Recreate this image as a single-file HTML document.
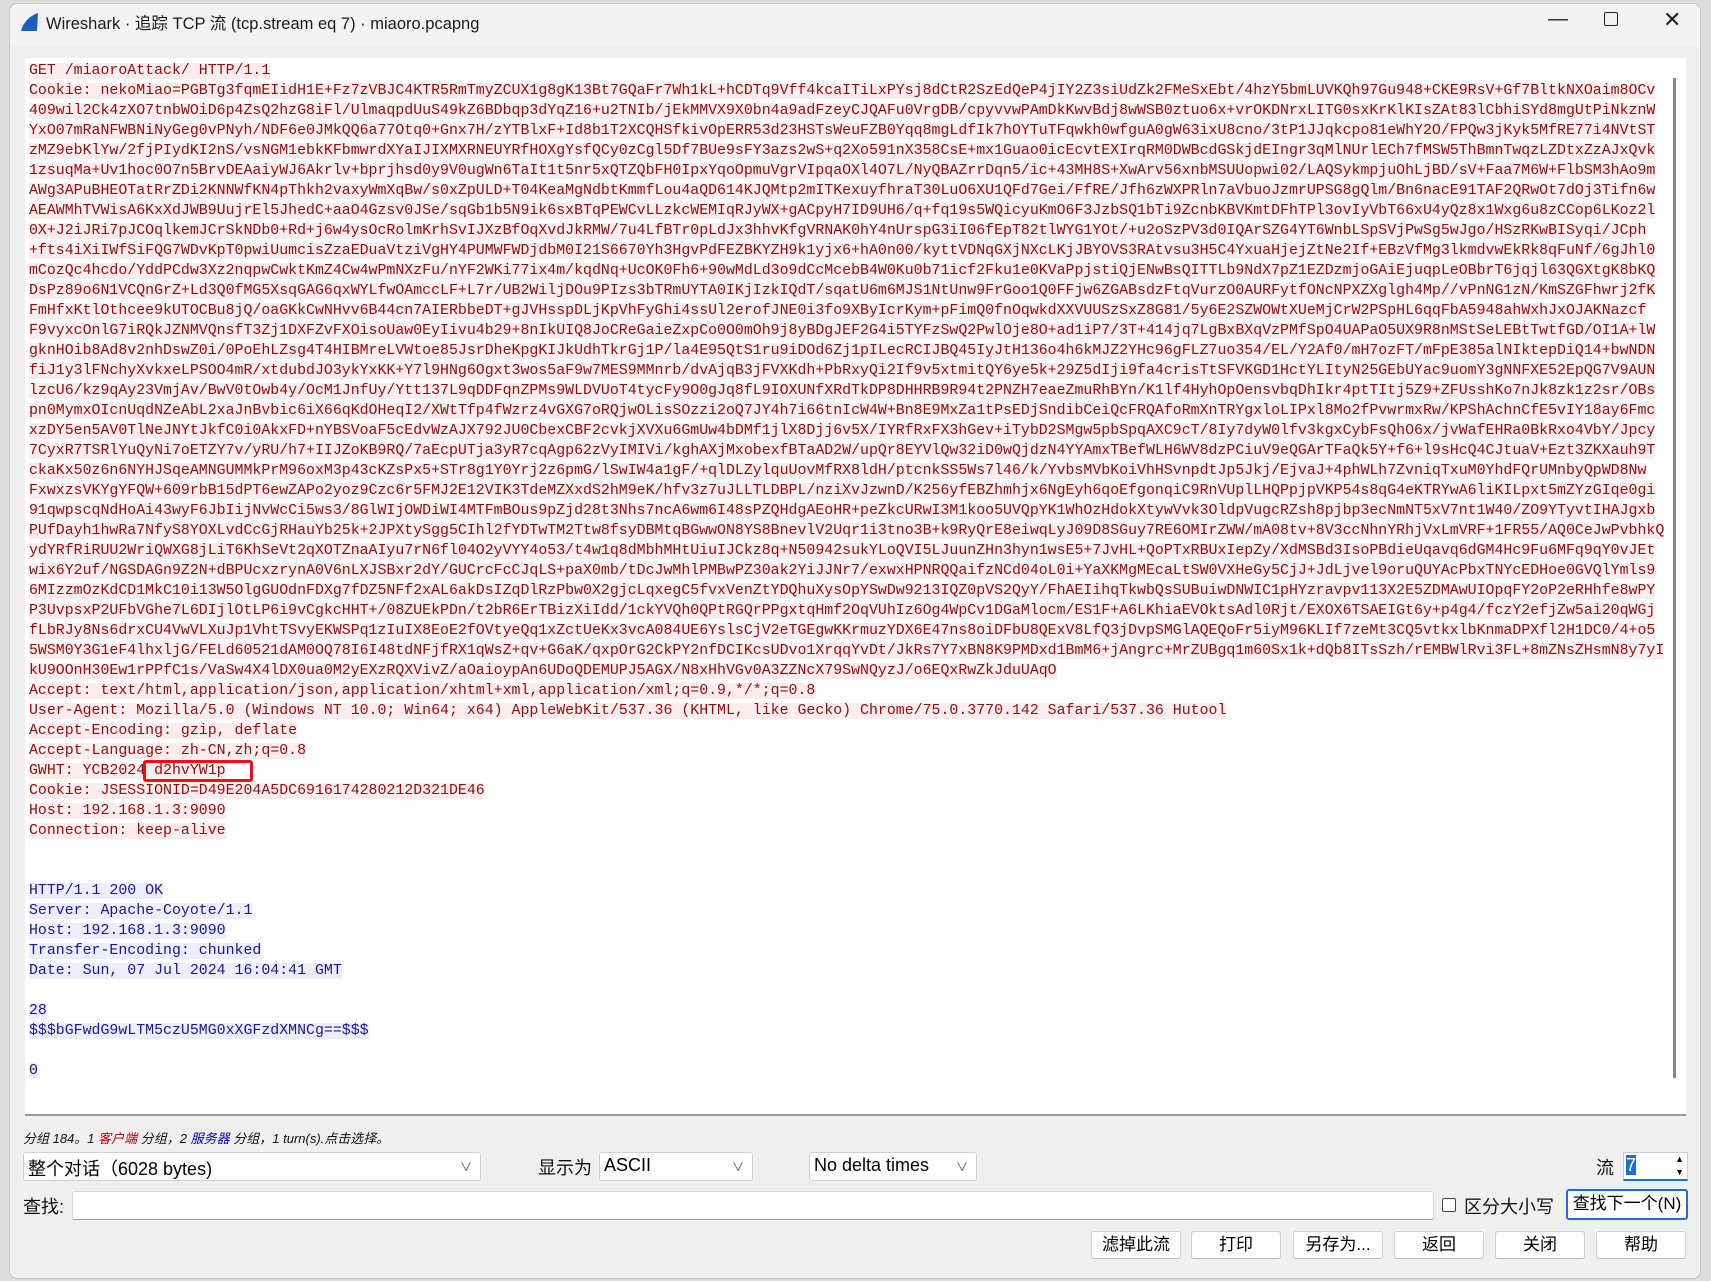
<!DOCTYPE html>
<html><head><meta charset="utf-8"><style>
*{box-sizing:border-box;margin:0;padding:0}
body{width:1711px;height:1281px;background:#dcdcdc;position:relative;overflow:hidden;font-family:"Liberation Sans","Noto Sans CJK SC",sans-serif}
.win{position:absolute;left:9px;top:3px;width:1692px;height:1276px;background:#efefef;border:1px solid #c8c8c8;border-radius:8px 8px 8px 8px}
.title{position:absolute;left:0;top:0;width:100%;height:42px;background:#f3f3f3;border-radius:8px 8px 0 0}
.title .t{position:absolute;left:36px;top:6px;font-size:16.5px;color:#1a1a1a}
.title .ctl{position:absolute;top:4px;font-size:20px;color:#222}
.text{position:absolute;left:15px;top:54px;width:1661px;height:1058px;background:#fff;border-bottom:2px solid #999}
pre{position:absolute;left:4px;top:3px;font-family:"Liberation Mono",monospace;font-size:14.9px;line-height:20px;white-space:pre}
.q{color:#8a1010;background:#fbeded}
.r{color:#1a1a8a;background:#ededfb}
.sb{position:absolute;right:10px;top:20px;width:3px;height:1000px;background:#888}
.box{position:absolute;left:118px;top:702px;width:110px;height:22px;border:3px solid #ee1111;border-radius:3px}
.ui{position:absolute;font-size:17px;color:#111}
.combo{position:absolute;background:#fdfdfd;border:1px solid #d0d0d0;border-radius:3px;height:29px;font-size:18px;padding:2px 4px}
.combo:after{content:"\2228";position:absolute;right:8px;top:5px;font-size:12px;color:#555}
.btn{position:absolute;top:1227px;height:28px;width:90px;background:#fdfdfd;border:1px solid #d0d0d0;border-bottom-color:#bbb;border-radius:3px;font-size:17px;text-align:center;line-height:26px}
</style></head><body>
<div class="win">
<div class="title"><svg style="position:absolute;left:9px;top:8px" width="20" height="20" viewBox="0 0 20 20"><path d="M2 19 C4 11 10 4 19 1 L18 19 Z" fill="#1a5fc0"/></svg><div class="t">Wireshark · 追踪 TCP 流 (tcp.stream eq 7) · miaoro.pcapng</div>
<div class="ctl" style="left:1538px">—</div><div class="ctl" style="left:1594px;top:8px;width:14px;height:14px;border:1.5px solid #222;border-radius:2px"></div><div class="ctl" style="left:1653px;top:3px;font-size:22px">✕</div></div>
<div class="text"><pre><span class="q">GET /miaoroAttack/ HTTP/1.1
Cookie: nekoMiao=PGBTg3fqmEIidH1E+Fz7zVBJC4KTR5RmTmyZCUX1g8gK13Bt7GQaFr7Wh1kL+hCDTq9Vff4kcaITiLxPYsj8dCtR2SzEdQeP4jIY2Z3siUdZk2FMeSxEbt/4hzY5bmLUVKQh97Gu948+CKE9RsV+Gf7BltkNXOaim8OCv
409wil2Ck4zXO7tnbWOiD6p4ZsQ2hzG8iFl/UlmaqpdUuS49kZ6BDbqp3dYqZ16+u2TNIb/jEkMMVX9X0bn4a9adFzeyCJQAFu0VrgDB/cpyvvwPAmDkKwvBdj8wWSB0ztuo6x+vrOKDNrxLITG0sxKrKlKIsZAt83lCbhiSYd8mgUtPiNkznW
YxO07mRaNFWBNiNyGeg0vPNyh/NDF6e0JMkQQ6a77Otq0+Gnx7H/zYTBlxF+Id8b1T2XCQHSfkivOpERR53d23HSTsWeuFZB0Yqq8mgLdfIk7hOYTuTFqwkh0wfguA0gW63ixU8cno/3tP1JJqkcpo81eWhY2O/FPQw3jKyk5MfRE77i4NVtST
zMZ9ebKlYw/2fjPIydKI2nS/vsNGM1ebkKFbmwrdXYaIJIXMXRNEUYRfHOXgYsfQCy0zCgl5Df7BUe9sFY3azs2wS+q2Xo591nX358CsE+mx1Guao0icEcvtEXIrqRM0DWBcdGSkjdEIngr3qMlNUrlECh7fMSW5ThBmnTwqzLZDtxZzAJxQvk
1zsuqMa+Uv1hoc0O7n5BrvDEAaiyWJ6Akrlv+bprjhsd0y9V0ugWn6TaIt1t5nr5xQTZQbFH0IpxYqoOpmuVgrVIpqaOXl4O7L/NyQBAZrrDqn5/ic+43MH8S+XwArv56xnbMSUUopwi02/LAQSykmpjuOhLjBD/sV+Faa7M6W+FlbSM3hAo9m
AWg3APuBHEOTatRrZDi2KNNWfKN4pThkh2vaxyWmXqBw/s0xZpULD+T04KeaMgNdbtKmmfLou4aQD614KJQMtp2mITKexuyfhraT30LuO6XU1QFd7Gei/FfRE/Jfh6zWXPRln7aVbuoJzmrUPSG8gQlm/Bn6nacE91TAF2QRwOt7dOj3Tifn6w
AEAWMhTVWisA6KxXdJWB9UujrEl5JhedC+aaO4Gzsv0JSe/sqGb1b5N9ik6sxBTqPEWCvLLzkcWEMIqRJyWX+gACpyH7ID9UH6/q+fq19s5WQicyuKmO6F3JzbSQ1bTi9ZcnbKBVKmtDFhTPl3ovIyVbT66xU4yQz8x1Wxg6u8zCCop6LKoz2l
0X+J2iJRi7pJCOqlkemJCrSkNDb0+Rd+j6w4ysOcRolmKrhSvIJXzBfOqXvdJkRMW/7u4LfBTr0pLdJx3hhvKfgVRNAK0hY4nUrspG3iI06fEpT82tlWYG1YOt/+u2oSzPV3d0IQArSZG4YT6WnbLSpSVjPwSg5wJgo/HSzRKwBISyqi/JCph
+fts4iXiIWfSiFQG7WDvKpT0pwiUumcisZzaEDuaVtziVgHY4PUMWFWDjdbM0I21S6670Yh3HgvPdFEZBKYZH9k1yjx6+hA0n00/kyttVDNqGXjNXcLKjJBYOVS3RAtvsu3H5C4YxuaHjejZtNe2If+EBzVfMg3lkmdvwEkRk8qFuNf/6gJhl0
mCozQc4hcdo/YddPCdw3Xz2nqpwCwktKmZ4Cw4wPmNXzFu/nYF2WKi77ix4m/kqdNq+UcOK0Fh6+90wMdLd3o9dCcMcebB4W0Ku0b71icf2Fku1e0KVaPpjstiQjENwBsQITTLb9NdX7pZ1EZDzmjoGAiEjuqpLeOBbrT6jqjl63QGXtgK8bKQ
DsPz89o6N1VCQnGrZ+Ld3Q0fMG5XsqGAG6qxWYLfwOAmccLF+L7r/UB2WiljDOu9PIzs3bTRmUYTA0IKjIzkIQdT/sqatU6m6MJS1NtUnw9FrGoo1Q0FFjw6ZGABsdzFtqVurzO0AURFytfONcNPXZXglgh4Mp//vPnNG1zN/KmSZGFhwrj2fK
FmHfxKtlOthcee9kUTOCBu8jQ/oaGKkCwNHvv6B44cn7AIERbbeDT+gJVHsspDLjKpVhFyGhi4ssUl2erofJNE0i3fo9XByIcrKym+pFimQ0fnOqwkdXXVUUSzSxZ8G81/5y6E2SZWOWtXUeMjCrW2PSpHL6qqFbA5948ahWxhJxOJAKNazcf
F9vyxcOnlG7iRQkJZNMVQnsfT3Zj1DXFZvFXOisoUaw0EyIivu4b29+8nIkUIQ8JoCReGaieZxpCo0O0mOh9j8yBDgJEF2G4i5TYFzSwQ2PwlOje8O+ad1iP7/3T+414jq7LgBxBXqVzPMfSpO4UAPaO5UX9R8nMStSeLEBtTwtfGD/OI1A+lW
gknHOib8Ad8v2nhDswZ0i/0PoEhLZsg4T4HIBMreLVWtoe85JsrDheKpgKIJkUdhTkrGj1P/la4E95QtS1ru9iDOd6Zj1pILecRCIJBQ45IyJtH136o4h6kMJZ2YHc96gFLZ7uo354/EL/Y2Af0/mH7ozFT/mFpE385alNIktepDiQ14+bwNDN
fiJ1y3lFNchyXvkxeLPSOO4mR/xtdubdJO3ykYxKK+Y7l9HNg6Ogxt3wos5aF9w7MES9MMnrb/dvAjqB3jFVXKdh+PbRxyQi2If9v5xtmitQY6ye5k+29Z5dIji9fa4crisTtSFVKGD1HctYLItyN25GEbUYac9uomY3gNNFXE52EpQG7V9AUN
lzcU6/kz9qAy23VmjAv/BwV0tOwb4y/OcM1JnfUy/Ytt137L9qDDFqnZPMs9WLDVUoT4tycFy9O0gJq8fL9IOXUNfXRdTkDP8DHHRB9R94t2PNZH7eaeZmuRhBYn/K1lf4HyhOpOensvbqDhIkr4ptTItj5Z9+ZFUsshKo7nJk8zk1z2sr/OBs
pn0MymxOIcnUqdNZeAbL2xaJnBvbic6iX66qKdOHeqI2/XWtTfp4fWzrz4vGXG7oRQjwOLisSOzzi2oQ7JY4h7i66tnIcW4W+Bn8E9MxZa1tPsEDjSndibCeiQcFRQAfoRmXnTRYgxloLIPxl8Mo2fPvwrmxRw/KPShAchnCfE5vIY18ay6Fmc
xzDY5en5AV0TlNeJNYtJkfC0i0AkxFD+nYBSVoaF5cEdvWzAJX792JU0CbexCBF2cvkjXVXu6GmUw4bDMf1jlX8Djj6v5X/IYRfRxFX3hGev+iTybD2SMgw5pbSpqAXC9cT/8Iy7dyW0lfv3kgxCybFsQhO6x/jvWafEHRa0BkRxo4VbY/Jpcy
7CyxR7TSRlYuQyNi7oETZY7v/yRU/h7+IIJZoKB9RQ/7aEcpUTja3yR7cqAgp62zVyIMIVi/kghAXjMxobexfBTaAD2W/upQr8EYVlQw32iD0wQjdzN4YYAmxTBefWLH6WV8dzPCiuV9eQGArTFaQk5Y+f6+l9sHcQ4CJtuaV+Ezt3ZKXauh9T
ckaKx50z6n6NYHJSqeAMNGUMMkPrM96oxM3p43cKZsPx5+STr8g1Y0Yrj2z6pmG/lSwIW4a1gF/+qlDLZylquUovMfRX8ldH/ptcnkSS5Ws7l46/k/YvbsMVbKoiVhHSvnpdtJp5Jkj/EjvaJ+4phWLh7ZvniqTxuM0YhdFQrUMnbyQpWD8Nw
FxwxzsVKYgYFQW+609rbB15dPT6ewZAPo2yoz9Czc6r5FMJ2E12VIK3TdeMZXxdS2hM9eK/hfv3z7uJLLTLDBPL/nziXvJzwnD/K256yfEBZhmhjx6NgEyh6qoEfgonqiC9RnVUplLHQPpjpVKP54s8qG4eKTRYwA6liKILpxt5mZYzGIqe0gi
91qwpscqNdHoAi43wyF6JbIijNvWcCi5ws3/8GlWIjOWDiWI4MTFmBOus9pZjd28t3Nhs7ncA6wm6I48sPZQHdgAEoHR+peZkcURwI3M1koo5UVQpYK1WhOzHdokXtywVvk3OldpVugcRZsh8pjbp3ecNmNT5xV7nt1W40/ZO9YTyvtIHAJgxb
PUfDayh1hwRa7NfyS8YOXLvdCcGjRHauYb25k+2JPXtySgg5CIhl2fYDTwTM2Ttw8fsyDBMtqBGwwON8YS8BnevlV2Uqr1i3tno3B+k9RyQrE8eiwqLyJ09D8SGuy7RE6OMIrZWW/mA08tv+8V3ccNhnYRhjVxLmVRF+1FR55/AQ0CeJwPvbhkQ
ydYRfRiRUU2WriQWXG8jLiT6KhSeVt2qXOTZnaAIyu7rN6fl04O2yVYY4o53/t4w1q8dMbhMHtUiuIJCkz8q+N50942sukYLoQVI5LJuunZHn3hyn1wsE5+7JvHL+QoPTxRBUxIepZy/XdMSBd3IsoPBdieUqavq6dGM4Hc9Fu6MFq9qY0vJEt
wix6Y2uf/NGSDAGn9Z2N+dBPUcxzrynA0V6nLXJSBxr2dY/GUCrcFcCJqLS+paX0mb/tDcJwMhlPMBwPZ30ak2YiJJNr7/exwxHPNRQQaifzNCd04oL0i+YaXKMgMEcaLtSW0VXHeGy5CjJ+JdLjvel9oruQUYAcPbxTNYcEDHoe0GVQlYmls9
6MIzzmOzKdCD1MkC10i13W5OlgGUOdnFDXg7fDZ5NFf2xAL6akDsIZqDlRzPbw0X2gjcLqxegC5fvxVenZtYDQhuXysOpYSwDw9213IQZ0pVS2QyY/FhAEIihqTkwbQsSUBuiwDNWIC1pHYzravpv113X2E5ZDMAwUIOpqFY2oP2eRHhfe8wPY
P3UvpsxP2UFbVGhe7L6DIjlOtLP6i9vCgkcHHT+/08ZUEkPDn/t2bR6ErTBizXiIdd/1ckYVQh0QPtRGQrPPgxtqHmf2OqVUhIz6Og4WpCv1DGaMlocm/ES1F+A6LKhiaEVOktsAdl0Rjt/EXOX6TSAEIGt6y+p4g4/fczY2efjZw5ai20qWGj
fLbRJy8Ns6drxCU4VwVLXuJp1VhtTSvyEKWSPq1zIuIX8EoE2fOVtyeQq1xZctUeKx3vcA084UE6YslsCjV2eTGEgwKKrmuzYDX6E47ns8oiDFbU8QExV8LfQ3jDvpSMGlAQEQoFr5iyM96KLIf7zeMt3CQ5vtkxlbKnmaDPXfl2H1DC0/4+o5
5WSM0Y3G1eF4lhxljG/FELd60521dAM0OQ78I6I48tdNFjfRX1qWsZ+qv+G6aK/qxpOrG2CkPY2nfDCIKcsUDvo1XrqqYvDt/JkRs7Y7xBN8K9PMDxd1BmM6+jAngrc+MrZUBgq1m60Sx1k+dQb8ITsSzh/rEMBWlRvi3FL+8mZNsZHsmN8y7yI
kU9OOnH30Ew1rPPfC1s/VaSw4X4lDX0ua0M2yEXzRQXVivZ/aOaioypAn6UDoQDEMUPJ5AGX/N8xHhVGv0A3ZZNcX79SwNQyzJ/o6EQxRwZkJduUAqO
Accept: text/html,application/json,application/xhtml+xml,application/xml;q=0.9,*/*;q=0.8
User-Agent: Mozilla/5.0 (Windows NT 10.0; Win64; x64) AppleWebKit/537.36 (KHTML, like Gecko) Chrome/75.0.3770.142 Safari/537.36 Hutool
Accept-Encoding: gzip, deflate
Accept-Language: zh-CN,zh;q=0.8
GWHT: YCB2024 d2hvYW1p
Cookie: JSESSIONID=D49E204A5DC6916174280212D321DE46
Host: 192.168.1.3:9090
Connection: keep-alive</span>


<span class="r">HTTP/1.1 200 OK
Server: Apache-Coyote/1.1
Host: 192.168.1.3:9090
Transfer-Encoding: chunked
Date: Sun, 07 Jul 2024 16:04:41 GMT

28
$$$bGFwdG9wLTM5czU5MG0xXGFzdXMNCg==$$$

0</span>
</pre><div class="box"></div><div class="sb"></div></div>
<div class="ui" style="left:13px;top:1124px;font-size:13px;font-style:italic">分组 184。1 <span style="color:#a00">客户端</span> 分组，2 <span style="color:#00a">服务器</span> 分组，1 turn(s).点击选择。</div>
<div class="combo" style="left:13px;top:1148px;width:458px">整个对话（6028 bytes)</div>
<div class="ui" style="left:528px;top:1150px;font-size:18px">显示为</div>
<div class="combo" style="left:589px;top:1148px;width:154px">ASCII</div>
<div class="combo" style="left:799px;top:1148px;width:168px">No delta times</div>
<div class="ui" style="left:1586px;top:1150px;font-size:18px">流</div>
<div style="position:absolute;left:1613px;top:1148px;width:65px;height:29px;background:#fff;border:1px solid #ccc;border-bottom:2px solid #1a6fd0;font-size:18px;padding:2px 2px"><span style="background:#1a6fd0;color:#fff">7</span><span style="position:absolute;right:3px;top:0;font-size:9px;line-height:13px">▲<br>▼</span></div>
<div class="ui" style="left:13px;top:1189px;font-size:18px">查找:</div>
<div style="position:absolute;left:62px;top:1187px;width:1362px;height:29px;background:#fff;border:1px solid #d5d5d5;border-bottom-color:#999;border-radius:3px"></div>
<div style="position:absolute;left:1432px;top:1194px;width:14px;height:14px;border:1px solid #444;border-radius:2px;background:#fff"></div>
<div class="ui" style="left:1454px;top:1189px;font-size:18px">区分大小写</div>
<div class="btn" style="left:1556px;top:1185px;width:122px;height:31px;border:2px solid #1a6fd0">查找下一个(N)</div>
<div class="btn" style="left:1081px">滤掉此流</div>
<div class="btn" style="left:1181px">打印</div>
<div class="btn" style="left:1283px">另存为...</div>
<div class="btn" style="left:1384px">返回</div>
<div class="btn" style="left:1485px">关闭</div>
<div class="btn" style="left:1586px">帮助</div>
</div>
</body></html>
